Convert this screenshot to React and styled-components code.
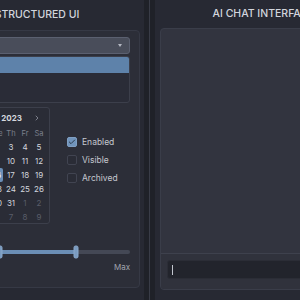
import React from 'react';
import styled, { createGlobalStyle } from 'styled-components';
import { ChevronLeft, ChevronRight, Check } from 'lucide-react';

const WEEKDAYS = ['Su', 'Mo', 'Tu', 'We', 'Th', 'Fr', 'Sa'];

// August 2023 grid, starting Sunday July 30
const buildWeeks = () => {
  const days = [];
  const start = new Date(2023, 6, 30);
  for (let i = 0; i < 42; i++) {
    const d = new Date(start);
    d.setDate(start.getDate() + i);
    days.push({ day: d.getDate(), outside: d.getMonth() !== 7 });
  }
  const weeks = [];
  for (let i = 0; i < 6; i++) weeks.push(days.slice(i * 7, i * 7 + 7));
  return weeks;
};

const App = () => {
  const weeks = buildWeeks();
  const range = [30, 71];

  return (
    <>
      <GlobalStyle />
      <Page>
        <Column $width={211} $padLeft={1} $padRight={4}>
          <Title $height={30}>Structured UI</Title>
          <Card $height={258}>
            <SelectWrap>
              <Select>
                <span>Date</span>
                <Caret />
              </Select>
              <Menu>
                <MenuItem $active>Date</MenuItem>
                <MenuItem>Text</MenuItem>
                <MenuItem>Number</MenuItem>
              </Menu>
            </SelectWrap>

            <FieldRow>
              <Calendar>
                <CalHeader>
                  <NavButton><ChevronLeft size={8} strokeWidth={2.5} /></NavButton>
                  <MonthLabel>August 2023</MonthLabel>
                  <NavButton><ChevronRight size={8} strokeWidth={2.5} /></NavButton>
                </CalHeader>
                <CalGrid>
                  {WEEKDAYS.map((w) => (
                    <Weekday key={w}>{w}</Weekday>
                  ))}
                  {weeks.flat().map((d, i) => (
                    <DayCell key={i} $outside={d.outside} $selected={!d.outside && d.day === 16}>
                      {d.day}
                    </DayCell>
                  ))}
                </CalGrid>
              </Calendar>

              <CheckGroup>
                <CheckRow>
                  <Box $checked><Check size={8} strokeWidth={3} /></Box>
                  Enabled
                </CheckRow>
                <CheckRow>
                  <Box />
                  Visible
                </CheckRow>
                <CheckRow>
                  <Box />
                  Archived
                </CheckRow>
              </CheckGroup>
            </FieldRow>

            <Slider>
              <Track>
                <Fill style={{ left: `${range[0]}%`, width: `${range[1] - range[0]}%` }} />
                <Thumb style={{ left: `${range[0]}%` }} />
                <Thumb style={{ left: `${range[1]}%` }} />
              </Track>
            </Slider>
            <SliderLabels>
              <span>Min</span>
              <span>Max</span>
            </SliderLabels>
          </Card>
        </Column>

        <Divider />

        <Column $width={216} $padLeft={5} $padRight={4}>
          <Title $height={28}>AI Chat Interface</Title>
          <ChatCard $height={262}>
            <Messages />
            <Composer>
              <ChatInput>
                <TextCursor />
              </ChatInput>
            </Composer>
          </ChatCard>
        </Column>
      </Page>
    </>
  );
};

export default App;

const GlobalStyle = createGlobalStyle`
  html, body {
    margin: 0;
    padding: 0;
    background: #272933;
    overflow: hidden;
  }
  body {
    font-family: Inter, "Noto Sans", sans-serif;
  }
`;

const Page = styled.div`
  display: flex;
  height: 300px;
  margin-left: -67px;
  width: 440px;
`;

const Column = styled.section`
  display: flex;
  flex-direction: column;
  box-sizing: border-box;
  width: ${(p) => p.$width}px;
  flex-shrink: 0;
  padding: 0 ${(p) => p.$padRight}px 0 ${(p) => p.$padLeft}px;
  background: #272933;
`;

const Title = styled.h2`
  margin: 0;
  height: ${(p) => p.$height}px;
  display: flex;
  align-items: center;
  justify-content: center;
  padding-bottom: 1px;
  box-sizing: border-box;
  font-size: 10.5px;
  font-weight: 500;
  letter-spacing: 0;
  white-space: nowrap;
  text-transform: uppercase;
  color: #d2d5dd;
`;

const Divider = styled.div`
  width: 11px;
  flex-shrink: 0;
  background: #1f2128;
  display: flex;
  justify-content: center;

  &::before {
    content: "";
    width: 1px;
    background: #393c47;
  }
`;

const Card = styled.div`
  box-sizing: border-box;
  height: ${(p) => p.$height}px;
  padding: 6px 9px 0;
  background: #2c2e38;
  border: 1px solid #363945;
  border-radius: 4px;
`;

const SelectWrap = styled.div`
  position: relative;
`;

const Select = styled.div`
  box-sizing: border-box;
  height: 17px;
  padding: 0 6px;
  display: flex;
  align-items: center;
  justify-content: space-between;
  background: #494d5a;
  border: 1px solid #5b6070;
  border-radius: 3px;
  font-size: 8px;
  color: #d0d3da;
`;

const Caret = styled.span`
  width: 0;
  height: 0;
  margin-right: 1px;
  border-left: 2.5px solid transparent;
  border-right: 2.5px solid transparent;
  border-top: 3px solid #b3b7c1;
`;

const Menu = styled.div`
  position: absolute;
  top: calc(100% + 2px);
  left: 0;
  right: 0;
  height: 47px;
  box-sizing: border-box;
  background: #2a2c37;
  border: 1px solid #3c3f4b;
  border-radius: 3px;
  overflow: hidden;
  z-index: 2;
`;

const MenuItem = styled.div`
  height: 16px;
  padding: 0 6px;
  display: flex;
  align-items: center;
  font-size: 8px;
  color: ${(p) => (p.$active ? '#eef2f7' : '#c3c6ce')};
  background: ${(p) => (p.$active ? '#5e82aa' : 'transparent')};
`;

const FieldRow = styled.div`
  display: flex;
  gap: 17px;
  margin-top: 53px;
`;

const Calendar = styled.div`
  box-sizing: border-box;
  width: 106px;
  height: 117px;
  padding: 3px 3px 0;
  background: #2a2c36;
  border: 1px solid #3c3f4b;
  border-radius: 3px;
`;

const CalHeader = styled.div`
  height: 14px;
  display: flex;
  align-items: center;
  justify-content: space-between;
  padding: 0 5px 0 4px;
`;

const MonthLabel = styled.span`
  font-size: 8px;
  font-weight: 700;
  color: #d4d7de;
`;

const NavButton = styled.span`
  display: flex;
  color: #8b8f9b;
`;

const CalGrid = styled.div`
  display: grid;
  grid-template-columns: repeat(7, 14px);
  grid-auto-rows: 14px;
  margin-top: 1px;
`;

const Weekday = styled.span`
  display: flex;
  align-items: center;
  justify-content: center;
  font-size: 7.5px;
  color: #7c808c;
`;

const DayCell = styled.span`
  display: flex;
  align-items: center;
  justify-content: center;
  margin: 0 1px;
  border-radius: 2px;
  font-size: 8px;
  color: ${(p) => (p.$outside ? '#595d69' : p.$selected ? '#ffffff' : '#d3d6dd')};
  background: ${(p) => (p.$selected ? '#6a8fb8' : 'transparent')};
`;

const CheckGroup = styled.div`
  display: flex;
  flex-direction: column;
  padding-top: 26px;
`;

const CheckRow = styled.label`
  height: 18px;
  display: flex;
  align-items: center;
  gap: 5px;
  font-size: 8.5px;
  color: #c4c7cf;
`;

const Box = styled.span`
  box-sizing: border-box;
  width: 10px;
  height: 10px;
  display: flex;
  align-items: center;
  justify-content: center;
  border-radius: 2px;
  background: ${(p) => (p.$checked ? '#7094bb' : '#2a2c36')};
  border: 1px solid ${(p) => (p.$checked ? '#7f9fc3' : '#414451')};
  color: #2b3a4c;
`;

const Slider = styled.div`
  margin-top: 21px;
  height: 13px;
  display: flex;
  align-items: center;
`;

const Track = styled.div`
  position: relative;
  flex: 1;
  height: 4px;
  border-radius: 2px;
  background: #444855;
`;

const Fill = styled.div`
  position: absolute;
  top: 0;
  bottom: 0;
  background: #6b8eb5;
`;

const Thumb = styled.span`
  position: absolute;
  top: 50%;
  width: 5px;
  height: 13px;
  box-sizing: border-box;
  transform: translate(-50%, -50%);
  border-radius: 2px;
  background: #7a9bc0;
  border: 1px solid #8aa8ca;
`;

const SliderLabels = styled.div`
  display: flex;
  justify-content: space-between;
  margin-top: 4px;
  font-size: 8px;
  color: #a0a4ae;
`;

const ChatCard = styled.div`
  box-sizing: border-box;
  height: ${(p) => p.$height}px;
  display: flex;
  flex-direction: column;
  background: #32343f;
  border: 1px solid #3a3d49;
  border-radius: 4px;
  overflow: hidden;
`;

const Messages = styled.div`
  flex: 1;
`;

const Composer = styled.div`
  padding: 6px 6px 10px;
  border-top: 1px solid #3e414d;
  background: #30323c;
`;

const ChatInput = styled.div`
  box-sizing: border-box;
  height: 19px;
  display: flex;
  align-items: center;
  padding-left: 4px;
  background: #22242c;
  border: 1px solid #2b2d36;
  border-radius: 3px;
`;

const TextCursor = styled.span`
  width: 1px;
  height: 10px;
  background: #c2c6ce;
`;
